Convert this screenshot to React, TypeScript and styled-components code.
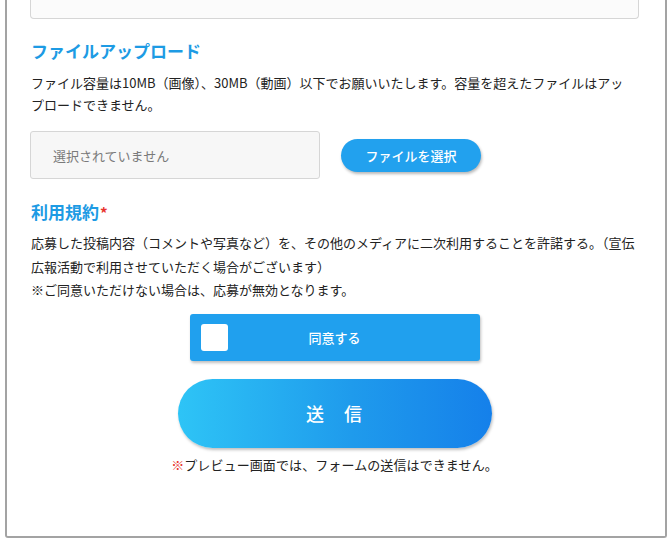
import React from 'react';
import styled, { createGlobalStyle } from 'styled-components';

const GlobalStyle = createGlobalStyle`
  html, body {
    margin: 0;
    padding: 0;
    background: #ffffff;
  }
  body {
    font-family: "Noto Sans CJK JP", "Noto Sans", sans-serif;
    color: #222;
  }
`;

const Frame = styled.div`
  margin-left: 5px;
  width: 662px;
  height: 538px;
  box-sizing: border-box;
  border: 2px solid #a3a3a3;
  border-top: none;
  border-radius: 0 0 3px 3px;
  padding: 0 26px 0 23px;
`;

const TextareaTail = styled.div`
  height: 18px;
  border: 1px solid #d6d6d6;
  border-top: none;
  border-radius: 0 0 4px 4px;
  background: #fbfbfb;
`;

const Section = styled.section<{ $top: number }>`
  margin-top: ${(p) => p.$top}px;
`;

const Heading = styled.h3`
  margin: 0;
  font-size: 17px;
  font-weight: 700;
  line-height: 24px;
  color: #1d9be4;
  padding-left: 1px;
`;

const Required = styled.span`
  color: #e8332d;
  font-size: 15px;
  margin-left: 1px;
`;

const Text = styled.p<{ $lh: number; $top: number; $inset?: number }>`
  margin: ${(p) => p.$top}px 0 0;
  font-size: 13px;
  line-height: ${(p) => p.$lh}px;
  color: #222;
  padding-left: 1px;
  padding-right: ${(p) => p.$inset ?? 0}px;
`;

const FileRow = styled.div`
  display: flex;
  align-items: center;
  gap: 21px;
  margin-top: 15px;
`;

const FileBox = styled.div`
  width: 290px;
  height: 48px;
  box-sizing: border-box;
  border: 1px solid #d6d6d6;
  border-radius: 3px;
  background: #f7f7f7;
  display: flex;
  align-items: center;
  padding-left: 22px;
  font-size: 13px;
  color: #7a7a7a;
`;

const PillButton = styled.button`
  width: 140px;
  height: 33px;
  border: none;
  border-radius: 17px;
  background: #22a1ee;
  color: #fff;
  font-family: inherit;
  font-size: 13px;
  font-weight: 500;
  box-shadow: 1px 2px 3px rgba(0, 0, 0, 0.28);
  padding: 0;
`;

const Center = styled.div<{ $top: number }>`
  display: flex;
  flex-direction: column;
  align-items: center;
  margin-top: ${(p) => p.$top}px;
`;

const AgreeButton = styled.label`
  position: relative;
  width: 290px;
  height: 47px;
  border-radius: 3px;
  background: #20a0ee;
  box-shadow: 1px 2px 3px rgba(0, 0, 0, 0.25);
  display: flex;
  align-items: center;
  justify-content: center;
  color: #fff;
  font-size: 13px;
  font-weight: 500;
`;

const CheckBox = styled.span`
  position: absolute;
  left: 11px;
  top: 10px;
  width: 27px;
  height: 27px;
  border-radius: 3px;
  background: #fff;
`;

const SubmitButton = styled.button`
  margin-top: 18px;
  width: 314px;
  height: 69px;
  border: none;
  border-radius: 35px;
  background: linear-gradient(90deg, #2ec4f6 0%, #1f9bec 55%, #1580ea 100%);
  box-shadow: 1px 2px 3px rgba(0, 0, 0, 0.25);
  color: #fff;
  font-family: inherit;
  font-size: 18px;
  font-weight: 500;
  letter-spacing: 1px;
  padding: 0;
`;

const Notice = styled.p`
  margin: 8px 0 0;
  font-size: 13px;
  line-height: 18px;
  letter-spacing: 0.1px;
  color: #222;
`;

const Mark = styled.span`
  color: #e8332d;
`;

export default function App() {
  return (
    <>
      <GlobalStyle />
      <Frame>
        <TextareaTail />

        <Section $top={20}>
          <Heading>ファイルアップロード</Heading>
          <Text $lh={22} $top={9} $inset={8}>
            ファイル容量は10MB（画像）、30MB（動画）以下でお願いいたします。容量を超えたファイルはアップロードできません。
          </Text>
          <FileRow>
            <FileBox>選択されていません</FileBox>
            <PillButton>ファイルを選択</PillButton>
          </FileRow>
        </Section>

        <Section $top={21}>
          <Heading>
            利用規約<Required>*</Required>
          </Heading>
          <Text $lh={23.5} $top={6}>
            応募した投稿内容（コメントや写真など）を、その他のメディアに二次利用することを許諾する。（宣伝広報活動で利用させていただく場合がございます）
          </Text>
          <Text $lh={23.5} $top={0}>
            ※ご同意いただけない場合は、応募が無効となります。
          </Text>
        </Section>

        <Center $top={12}>
          <AgreeButton>
            <CheckBox />
            同意する
          </AgreeButton>
          <SubmitButton>送　信</SubmitButton>
          <Notice>
            <Mark>※</Mark>プレビュー画面では、フォームの送信はできません。
          </Notice>
        </Center>
      </Frame>
    </>
  );
}
